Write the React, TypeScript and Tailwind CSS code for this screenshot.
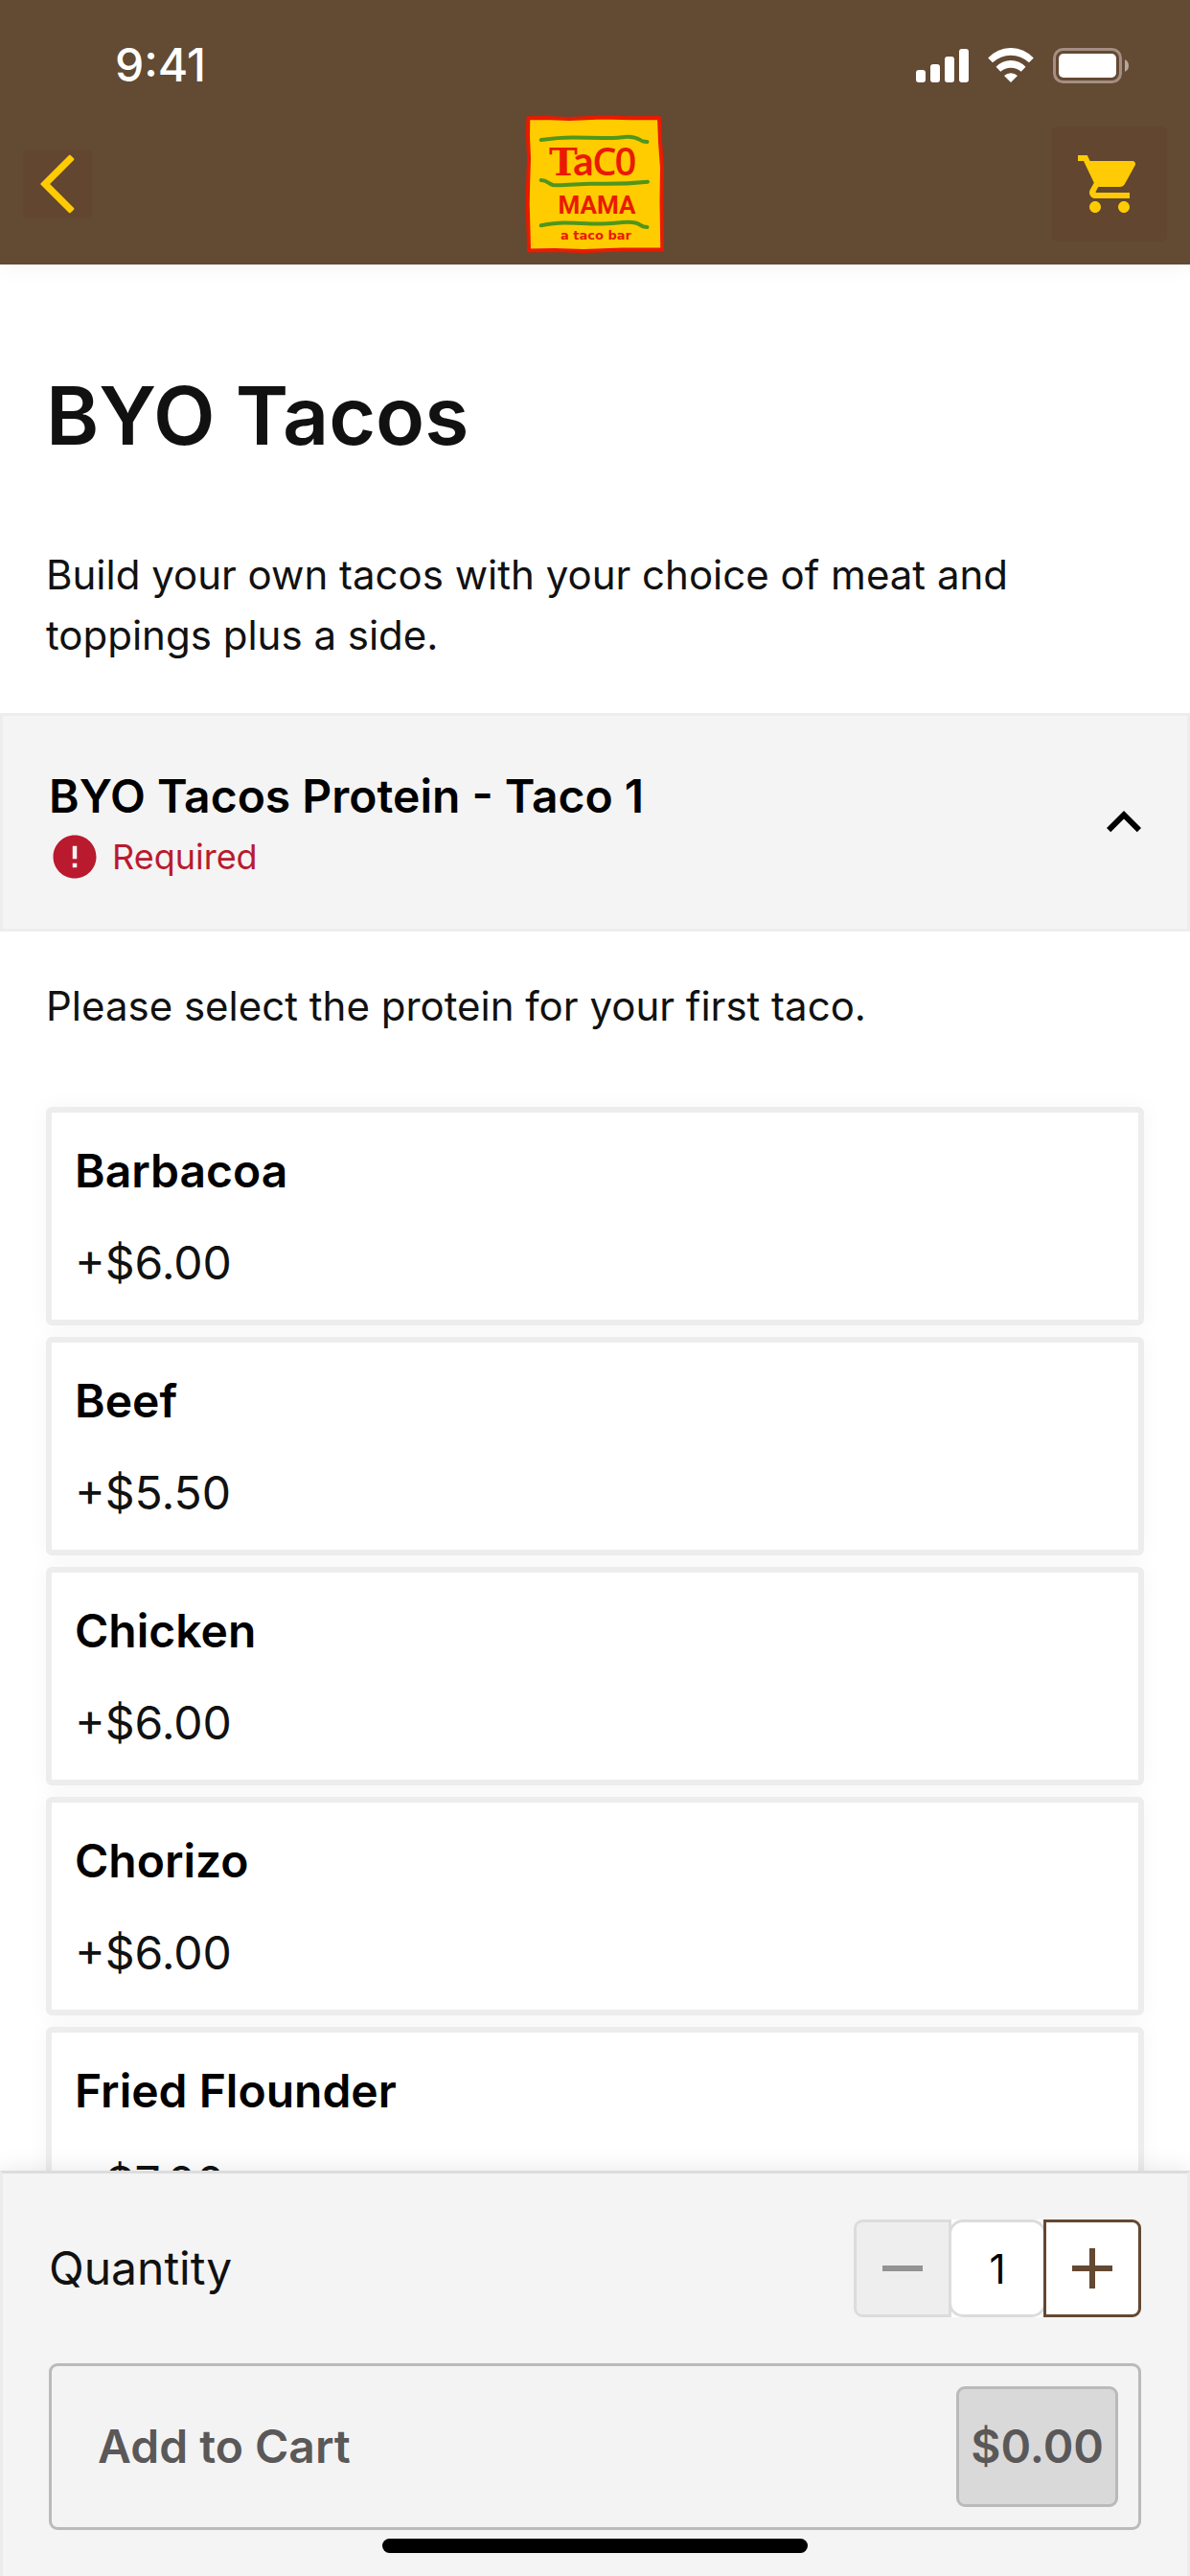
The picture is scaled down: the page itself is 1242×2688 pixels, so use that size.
import React, { useState } from "react";
import {
  MdAdd,
  MdError,
  MdKeyboardArrowDown,
  MdKeyboardArrowUp,
  MdRemove,
  MdShoppingCart,
} from "react-icons/md";

interface Option {
  name: string;
  price: number;
}

const proteins: Option[] = [
  { name: "Barbacoa", price: 6 },
  { name: "Beef", price: 5.5 },
  { name: "Chicken", price: 6 },
  { name: "Chorizo", price: 6 },
  { name: "Fried Flounder", price: 7 },
];

function StatusBar() {
  return (
    <div className="flex h-[120px] items-center justify-between pt-4 pr-16 pl-[120px]">
      <span className="text-[48px] leading-[72px] font-medium text-white">
        9:41
      </span>
      <div className="flex items-center gap-5 text-white">
        {/* Signal */}
        <svg width="55" height="36" viewBox="0 0 55 36" fill="currentColor">
          <rect x="0" y="23" width="10" height="13" rx="3" />
          <rect x="15" y="17" width="10" height="19" rx="3" />
          <rect x="30" y="9" width="10" height="27" rx="3" />
          <rect x="45" y="1" width="10" height="35" rx="3" />
        </svg>
        {/* Wifi */}
        <svg width="48" height="36" viewBox="0 0 48 36" fill="currentColor">
          <path d="M.2 10.5A32.2 32.2 0 0 1 47.8 10.5L43 15.3A27.5 27.5 0 0 0 5 15.3Z" />
          <path d="M8.5 19.7A21.3 21.3 0 0 1 39.5 19.7L34.7 24.7A16.3 16.3 0 0 0 13.3 24.7Z" />
          <path d="M17 29A10 10 0 0 1 31 29L24 36Z" />
        </svg>
        {/* Battery */}
        <svg width="79" height="37" viewBox="0 0 79 37" fill="currentColor">
          <rect
            x="1.5"
            y="1.5"
            width="69"
            height="34"
            rx="9"
            fill="none"
            stroke="#a58f84"
            strokeWidth="3"
          />
          <rect x="6" y="6" width="60" height="25" rx="5" />
          <path d="M75 12Q79 14 79 18.500Q79 23 75 25Z" fill="#b5a79b" />
        </svg>
      </div>
    </div>
  );
}

function Logo() {
  return (
    <svg width="144" height="144" viewBox="0 0 144 144" role="img">
      <title>Taco Mama</title>
      <path
        d="M2.300 3.300L20 3L45 4L80 2.500L110 3.200L139 3L140 28L142 55L141.500 90L142.300 140.500L100 140.500L60 142L30 141L3 141.500L2.500 120L1.700 93L2.200 70L3 45L2 22Z"
        fill="#ffcc00"
        stroke="#ea1a00"
        strokeWidth="4"
        strokeLinejoin="round"
      />
      <g
        fill="none"
        stroke="#4f961c"
        strokeWidth="4"
        strokeLinecap="round"
        strokeLinejoin="round"
      >
        <path d="M15.700 26Q35 23.300 50 23.500T80 24T105 22.700C116 22 118 26 122 27.500L126.500 28" />
        <path d="M15.700 68C22 68 23 71.500 28 73C36 74 55 71.800 67.700 71.700S94 73 127 69.700" />
        <path d="M15.700 115.300Q30 112.500 40 112.500T64 113.300T101 112C118 111 118 115 122.700 116.500L126.500 117" />
      </g>
      <g fill="#ea1a00" textAnchor="middle">
        <text
          y="63"
          fontSize="40"
          className="font-['Open_Sans',sans-serif] font-semibold"
        >
          <tspan x="39" className="font-['DejaVu_Serif',serif]">
            T
          </tspan>
          <tspan x="60" fontSize="42" className="font-['Lato',sans-serif] font-bold">
            a
          </tspan>
          <tspan x="82">C</tspan>
          <tspan x="104">0</tspan>
        </text>
        <text
          x="74"
          y="103"
          fontSize="26"
          className="font-['Roboto',sans-serif] font-bold"
        >
          MAMA
        </text>
        <text
          x="73"
          y="130"
          fontSize="13"
          className="font-['DejaVu_Sans',sans-serif] font-bold"
        >
          a taco bar
        </text>
      </g>
    </svg>
  );
}

function Header() {
  return (
    <header className="relative z-10 bg-[#634a32] pb-3 shadow-[0_0_24px_rgba(0,0,0,0.06)]">
      <StatusBar />
      <nav className="grid grid-cols-[1fr_auto_1fr] items-center px-6">
        <button
          aria-label="Back"
          className="justify-self-start rounded-md bg-[#624630] text-[#ffcb05]"
        >
          <svg width="72" height="72" viewBox="0 0 72 72">
            <path
              d="M48.800 6.800L52.200 10.200L26.500 36L52.200 61.800L48.800 65.200L19.500 36Z"
              fill="currentColor"
              stroke="currentColor"
              strokeWidth="2.400"
              strokeLinejoin="round"
            />
          </svg>
        </button>
        <Logo />
        <button
          aria-label="Cart"
          className="justify-self-end rounded-md bg-[#624630] p-6 text-[#ffcb05]"
        >
          <MdShoppingCart size={72} />
        </button>
      </nav>
    </header>
  );
}

function OptionCard({ option }: { option: Option }) {
  return (
    <button className="flex flex-col gap-6 rounded-md border-6 border-[#ededed] bg-white px-6 pt-[25px] pb-[23px] text-left text-[48px] leading-[72px] shadow-[0_0_24px_rgba(0,0,0,0.04)]">
      <span className="font-semibold text-black">{option.name}</span>
      <span className="text-[#111111]">+${option.price.toFixed(2)}</span>
    </button>
  );
}

function Footer() {
  const [quantity, setQuantity] = useState(1);

  return (
    <footer className="relative z-10 border-x-3 border-t-3 border-x-[#ececec] border-t-[#dcdcdc] bg-[#f4f4f4] px-12 pt-12 pb-6 shadow-[0_0_24px_rgba(0,0,0,0.1)]">
      <div className="flex items-center justify-between">
        <label
          htmlFor="quantity"
          className="text-[48px] leading-[72px] text-[#111111]"
        >
          Quantity
        </label>
        <div className="flex rounded-[9px] bg-white">
          <button
            aria-label="Decrease quantity"
            disabled={quantity <= 1}
            onClick={() => setQuantity(quantity - 1)}
            className="z-10 flex size-[102px] items-center justify-center rounded-l-[9px] border-3 border-[#dcdcdc] bg-[#eeeeee] text-[#939393]"
          >
            <MdRemove size={72} />
          </button>
          <input
            id="quantity"
            type="text"
            inputMode="numeric"
            value={quantity}
            onChange={(e) => setQuantity(Number(e.target.value) || 1)}
            className="-mx-[3px] size-[102px] rounded-[15px] border-3 border-[#dcdcdc] bg-white text-center text-[42px] text-black"
          />
          <button
            aria-label="Increase quantity"
            onClick={() => setQuantity(quantity + 1)}
            className="z-10 flex size-[102px] items-center justify-center rounded-r-[9px] border-3 border-[#634832] bg-white text-[#634832]"
          >
            <MdAdd size={72} />
          </button>
        </div>
      </div>
      <button
        disabled
        className="mt-12 flex w-full items-center justify-between rounded-[9px] border-3 border-[#bababa] bg-[#f3f3f3] py-[21px] pr-[21px] pl-12 text-[48px] leading-[72px] font-semibold text-[#5a5858]"
      >
        <span>Add to Cart</span>
        <span className="rounded-[9px] border-3 border-[#bababa] bg-[#d9d9d9] px-3 py-6">
          $0.00
        </span>
      </button>
      <div className="mx-auto mt-[9px] h-[15px] w-[444px] rounded-full bg-black" />
    </footer>
  );
}

export default function App() {
  const [open, setOpen] = useState(true);

  return (
    <div className="flex h-screen flex-col bg-white font-['Inter',sans-serif] text-[#111111]">
      <Header />
      <main className="min-h-0 flex-1 overflow-y-auto [scrollbar-width:none]">
        <div className="px-12 pt-[98px] pb-[50px]">
          <h1 className="text-[84px] leading-[120px] font-semibold">
            BYO Tacos
          </h1>
          <p className="mt-[74px] text-[42px] leading-[63px]">
            Build your own tacos with your choice of meat and toppings plus a
            side.
          </p>
        </div>

        <button
          aria-expanded={open}
          onClick={() => setOpen(!open)}
          className="flex w-full items-center justify-between border-3 border-[#ededed] bg-[#f4f4f4] py-12 pr-[30px] pl-12 text-left"
        >
          <span className="flex flex-col">
            <span className="text-[48px] leading-[72px] font-semibold text-black">
              BYO Tacos Protein - Taco 1
            </span>
            <span className="flex items-center gap-3 text-[36px] leading-[54px] text-[#ba1a2e]">
              <MdError size={54} />
              Required
            </span>
          </span>
          {open ? (
            <MdKeyboardArrowUp size={72} className="text-black" />
          ) : (
            <MdKeyboardArrowDown size={72} className="text-black" />
          )}
        </button>

        {open && (
          <div className="px-12 pt-[46px] pb-12">
            <p className="text-[42px] leading-[63px]">
              Please select the protein for your first taco.
            </p>
            <div className="mt-[74px] flex flex-col gap-3">
              {proteins.map((option) => (
                <OptionCard key={option.name} option={option} />
              ))}
            </div>
          </div>
        )}
      </main>
      <Footer />
    </div>
  );
}
